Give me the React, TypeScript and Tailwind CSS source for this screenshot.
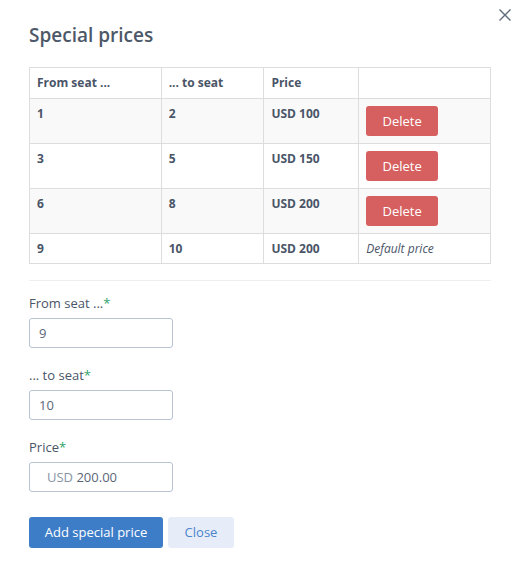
import React from "react";

const rows = [
  { from: "1", to: "2", price: "USD 100", del: true },
  { from: "3", to: "5", price: "USD 150", del: true },
  { from: "6", to: "8", price: "USD 200", del: true },
  { from: "9", to: "10", price: "USD 200", del: false },
];

export default function App() {
  return (
    <div
      className="relative w-[518px] h-[571px] bg-white text-[#4a5568]"
      style={{ fontFamily: '"Open Sans", sans-serif' }}
    >
      <button className="absolute left-[497px] top-[7px] w-[16px] h-[16px] flex items-center justify-center">
        <svg width="14" height="14" viewBox="0 0 14 14" fill="none" stroke="#5f6b7a" strokeWidth="1.4">
          <path d="M1.5 1.5L12.5 12.5M12.5 1.5L1.5 12.5" />
        </svg>
      </button>
      <div className="pl-[29px] pr-[27px] pt-[22px]">
        <h1 className="text-[19px] leading-[27px] font-semibold text-[#4d5868]">Special prices</h1>
        <table className="mt-[18px] w-[462px] border-collapse text-[12px] leading-[16px]">
          <colgroup>
            <col className="w-[132px]" />
            <col className="w-[103px]" />
            <col className="w-[95px]" />
            <col className="w-[132px]" />
          </colgroup>
          <thead>
            <tr>
              <th className="border border-[#dddddd] px-[7px] py-[7px] text-left font-bold align-top">From seat ...</th>
              <th className="border border-[#dddddd] px-[7px] py-[7px] text-left font-bold align-top">... to seat</th>
              <th className="border border-[#dddddd] px-[7px] py-[7px] text-left font-bold align-top">Price</th>
              <th className="border border-[#dddddd] px-[7px] py-[7px]"></th>
            </tr>
          </thead>
          <tbody>
            {rows.map((r, i) => {
              const pad = r.del ? "px-[7px] py-[7px]" : "px-[7px] pt-[7px] pb-[6px]";
              return (
                <tr key={i} className={i % 2 === 0 ? "bg-[#f9f9f9]" : "bg-white"}>
                  <td className={`border border-[#dddddd] ${pad} font-bold align-top`}>{r.from}</td>
                  <td className={`border border-[#dddddd] ${pad} font-bold align-top`}>{r.to}</td>
                  <td className={`border border-[#dddddd] ${pad} font-bold align-top`}>{r.price}</td>
                  <td className={`border border-[#dddddd] ${pad} align-top`}>
                    {r.del ? (
                      <button className="block w-[72px] h-[30px] rounded-[3px] bg-[#d65f5f] text-white text-[13px] leading-[30px]">
                        Delete
                      </button>
                    ) : (
                      <span className="block italic text-[12px] leading-[16px]">Default price</span>
                    )}
                  </td>
                </tr>
              );
            })}
          </tbody>
        </table>
        <div className="mt-[16px] w-[462px] h-px bg-[#eeeeee]" />
        <div className="mt-[13px] flex flex-col">
          <label className="text-[13px] leading-[18px]">
            From seat ...<span className="text-[#2ea36b]">*</span>
          </label>
          <div className="mt-[6px] w-[144px] h-[30px] rounded-[3px] border border-[#b8c4d4] px-[9px] text-[13px] leading-[28px] text-[#5a6677]">
            9
          </div>
          <label className="mt-[18px] text-[13px] leading-[18px]">
            ... to seat<span className="text-[#2ea36b]">*</span>
          </label>
          <div className="mt-[6px] w-[144px] h-[30px] rounded-[3px] border border-[#b8c4d4] px-[9px] text-[13px] leading-[28px] text-[#5a6677]">
            10
          </div>
          <label className="mt-[18px] text-[13px] leading-[18px]">
            Price<span className="text-[#2ea36b]">*</span>
          </label>
          <div className="mt-[6px] w-[144px] h-[30px] rounded-[3px] border border-[#b8c4d4] pl-[17px] text-[13px] leading-[28px] text-[#5a6677]">
            <span className="text-[#8794a6]">USD</span> 200.00
          </div>
        </div>
        <div className="mt-[25px] flex gap-[5px]">
          <button className="w-[134px] h-[31px] rounded-[3px] bg-[#3d7dc8] text-white text-[13px]">
            Add special price
          </button>
          <button className="w-[66px] h-[31px] rounded-[3px] bg-[#e6edf8] text-[#4a85cc] text-[13px]">
            Close
          </button>
        </div>
      </div>
    </div>
  );
}
